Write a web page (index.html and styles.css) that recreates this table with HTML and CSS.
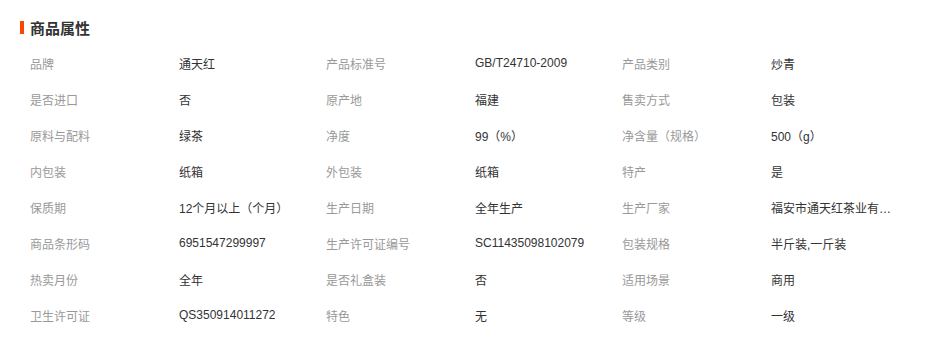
FILE: index.html
```html
<!DOCTYPE html>
<html lang="zh-CN">
<head>
<meta charset="utf-8">
<link rel="stylesheet" href="styles.css">
</head>
<body>
<div class="panel">
  <h2 class="title"><span class="bar"></span>商品属性</h2>
  <ul class="attrs">
    <li class="attr"><span class="label">品牌</span><span class="value">通天红</span></li>
    <li class="attr"><span class="label">产品标准号</span><span class="value">GB/T24710-2009</span></li>
    <li class="attr"><span class="label">产品类别</span><span class="value">炒青</span></li>
    <li class="attr"><span class="label">是否进口</span><span class="value">否</span></li>
    <li class="attr"><span class="label">原产地</span><span class="value">福建</span></li>
    <li class="attr"><span class="label">售卖方式</span><span class="value">包装</span></li>
    <li class="attr"><span class="label">原料与配料</span><span class="value">绿茶</span></li>
    <li class="attr"><span class="label">净度</span><span class="value">99（%）</span></li>
    <li class="attr"><span class="label">净含量（规格）</span><span class="value">500（g）</span></li>
    <li class="attr"><span class="label">内包装</span><span class="value">纸箱</span></li>
    <li class="attr"><span class="label">外包装</span><span class="value">纸箱</span></li>
    <li class="attr"><span class="label">特产</span><span class="value">是</span></li>
    <li class="attr"><span class="label">保质期</span><span class="value">12个月以上（个月）</span></li>
    <li class="attr"><span class="label">生产日期</span><span class="value">全年生产</span></li>
    <li class="attr"><span class="label">生产厂家</span><span class="value">福安市通天红茶业有…</span></li>
    <li class="attr"><span class="label">商品条形码</span><span class="value">6951547299997</span></li>
    <li class="attr"><span class="label">生产许可证编号</span><span class="value">SC11435098102079</span></li>
    <li class="attr"><span class="label">包装规格</span><span class="value">半斤装,一斤装</span></li>
    <li class="attr"><span class="label">热卖月份</span><span class="value">全年</span></li>
    <li class="attr"><span class="label">是否礼盒装</span><span class="value">否</span></li>
    <li class="attr"><span class="label">适用场景</span><span class="value">商用</span></li>
    <li class="attr"><span class="label">卫生许可证</span><span class="value">QS350914011272</span></li>
    <li class="attr"><span class="label">特色</span><span class="value">无</span></li>
    <li class="attr"><span class="label">等级</span><span class="value">一级</span></li>
  </ul>
</div>
</body>
</html>
```
FILE: styles.css
```css
html, body {
  margin: 0;
  padding: 0;
  background: #fff;
}
body {
  font-family: "Liberation Sans", "Noto Sans CJK SC", sans-serif;
  font-size: 12px;
  color: #333;
}
.panel {
  padding: 16px 0 0 20px;
}
.title {
  display: flex;
  align-items: center;
  gap: 6px;
  margin: 0;
  height: 22px;
  font-size: 15px;
  font-weight: bold;
  color: #333;
  font-family: "Noto Sans CJK SC", sans-serif;
}
.bar {
  display: block;
  width: 4px;
  height: 13px;
  background: #ff4400;
}
.attrs {
  list-style: none;
  margin: 7px 0 0 0;
  padding: 0 0 0 10px;
  display: grid;
  grid-template-columns: repeat(3, 296px);
  grid-auto-rows: 36px;
}
.attr {
  display: flex;
  align-items: center;
}
.label {
  width: 149px;
  flex: none;
  color: #999;
}
.value {
  white-space: nowrap;
  color: #333;
}
```
